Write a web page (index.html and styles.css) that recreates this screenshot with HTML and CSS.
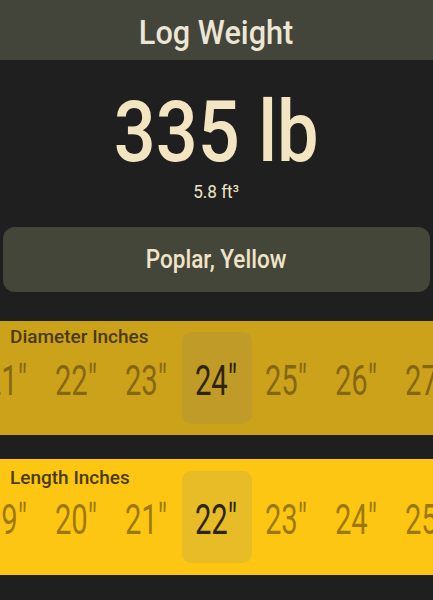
FILE: index.html
```html
<!DOCTYPE html>
<html>
<head>
<meta charset="utf-8">
<link rel="stylesheet" href="styles.css">
</head>
<body>
<header class="topbar"><span class="title">Log Weight</span></header>
<section class="result">
  <div class="weight"><span class="squeeze">335 lb</span></div>
  <div class="volume"><span class="squeeze-s">5.8 ft³</span></div>
</section>
<button class="species"><span class="squeeze-m">Poplar, Yellow</span></button>
<section class="band band-diameter">
  <div class="label label-diameter">Diameter Inches</div>
  <div class="picker">
    <div class="item"><span class="num">21"</span></div>
    <div class="item"><span class="num">22"</span></div>
    <div class="item"><span class="num">23"</span></div>
    <div class="item selected"><span class="num">24"</span></div>
    <div class="item"><span class="num">25"</span></div>
    <div class="item"><span class="num">26"</span></div>
    <div class="item"><span class="num">27"</span></div>
  </div>
</section>
<section class="band band-length">
  <div class="label label-length">Length Inches</div>
  <div class="picker">
    <div class="item"><span class="num">19"</span></div>
    <div class="item"><span class="num">20"</span></div>
    <div class="item"><span class="num">21"</span></div>
    <div class="item selected"><span class="num">22"</span></div>
    <div class="item"><span class="num">23"</span></div>
    <div class="item"><span class="num">24"</span></div>
    <div class="item"><span class="num">25"</span></div>
  </div>
</section>
</body>
</html>
```
FILE: styles.css
```css
html, body {
  margin: 0;
  padding: 0;
  background: #1f1f1f;
  font-family: Roboto, "Liberation Sans", sans-serif;
  height: 600px;
  overflow: hidden;
}

.topbar {
  height: 60px;
  background: #43443a;
  display: flex;
  align-items: center;
  justify-content: center;
}

.title {
  display: inline-block;
  font-size: 33px;
  font-weight: 500;
  color: #ece6d4;
  line-height: 1;
  transform: scaleX(0.93);
  padding-top: 4px;
}

.result {
  display: flex;
  flex-direction: column;
  align-items: center;
  padding-top: 29px;
}

.weight {
  font-size: 86px;
  line-height: 1;
  font-weight: 500;
  color: #f3e4c2;
}

.squeeze {
  display: inline-block;
  transform: scaleX(0.86);
}

.volume {
  margin-top: 8px;
  font-size: 18px;
  line-height: 1;
  color: #efe4c8;
}

.squeeze-s {
  display: inline-block;
  transform: scaleX(0.95);
}

.species {
  display: flex;
  align-items: center;
  justify-content: center;
  box-sizing: border-box;
  width: 427px;
  height: 65px;
  margin: 26px 0 0 3px;
  border: none;
  border-radius: 12px;
  background: #45463a;
  color: #efe4c8;
  font-family: Roboto, "Liberation Sans", sans-serif;
  font-size: 25px;
  font-weight: 500;
  padding: 0;
}

.squeeze-m {
  display: inline-block;
  transform: scaleX(0.9);
}

.band {
  display: grid;
  grid-template-columns: minmax(0, 1fr);
  overflow: hidden;
  box-sizing: border-box;
}

.band > * {
  grid-area: 1 / 1;
  min-width: 0;
}

.band-diameter {
  margin-top: 29px;
  height: 114px;
  padding: 11px 0;
  background: #cda21b;
}

.band-length {
  margin-top: 24px;
  height: 116px;
  padding: 12px 0;
  background: #fcc612;
}

.label {
  font-size: 19px;
  line-height: 1;
  font-weight: 500;
  color: #4a3b12;
  padding-left: 10px;
  align-self: start;
  z-index: 1;
}

.label-diameter {
  margin-top: -5px;
}

.label-length {
  margin-top: -3px;
}

.picker {
  display: flex;
  justify-content: center;
  height: 92px;
}

.item {
  flex: 0 0 70px;
  height: 92px;
  display: flex;
  align-items: center;
  justify-content: center;
  border-radius: 9px;
  padding-top: 5px;
  box-sizing: border-box;
}

.num {
  display: inline-block;
  font-size: 43px;
  line-height: 1;
  color: rgba(60, 45, 10, 0.5);
  transform: scaleX(0.68);
  white-space: nowrap;
}

.band-diameter .selected {
  background: #c19b27;
}

.band-length .selected {
  background: #e8bc27;
}

.selected .num {
  color: #2d2510;
}
```
